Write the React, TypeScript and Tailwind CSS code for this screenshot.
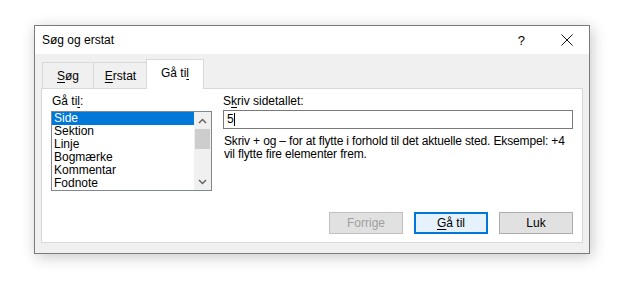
const items = ['Side', 'Sektion', 'Linje', 'Bogmærke', 'Kommentar', 'Fodnote']

const font = { fontFamily: '"Liberation Sans", Arial, sans-serif' }

function Chevron({ down }: { down?: boolean }) {
  return (
    <svg width="9" height="6" viewBox="0 0 9 6" className="block">
      <polyline
        points={down ? '1,1 4.5,4.5 8,1' : '1,5 4.5,1.5 8,5'}
        fill="none"
        stroke="#606060"
        strokeWidth="1.4"
      />
    </svg>
  )
}

export default function App() {
  return (
    <div className="w-[620px] h-[282px] bg-white pt-[25px] pl-[34px] text-[12px] leading-[13px] text-black" style={font}>
      <div className="w-[556px] h-[229px] border border-[#7a7a7a] bg-[#f0f0f0] shadow-[2px_3px_14px_rgba(0,0,0,0.22)] flex flex-col">
        {/* Title bar */}
        <div className="h-[28px] bg-white flex items-center pl-[7px] pr-[16px]">
          <span className="text-[12px]">Søg og erstat</span>
          <span className="ml-auto mr-[36px] text-[13px]">?</span>
          <svg width="12" height="12" viewBox="0 0 12 12">
            <path d="M0.5 0.5 L11.5 11.5 M11.5 0.5 L0.5 11.5" stroke="#111" strokeWidth="1" />
          </svg>
        </div>

        {/* Body */}
        <div className="flex-1 flex flex-col px-[6px] pt-[5px] pb-[10px]">
          {/* Tabs */}
          <div className="h-[29px] flex items-end pl-[1px] relative z-10">
            <div className="h-[26px] w-[52px] border border-b-0 border-[#d9d9d9] flex items-center justify-center pt-[2px]">
              <span><span className="underline underline-offset-2">S</span>øg</span>
            </div>
            <div className="h-[26px] w-[54px] border border-b-0 border-l-0 border-[#d9d9d9] flex items-center justify-center pt-[2px]">
              <span><span className="underline underline-offset-2">E</span>rstat</span>
            </div>
            <div className="h-[30px] w-[58px] -mb-px -ml-[2px] bg-white border border-b-0 border-[#d9d9d9] flex items-center justify-center pb-[2px]">
              <span>Gå ti<span className="underline underline-offset-2">l</span></span>
            </div>
          </div>

          {/* Panel */}
          <div className="flex-1 bg-white border border-[#d9d9d9] flex flex-col pl-[9px] pr-[9px] pt-[6px] pb-[8px]">
            <div className="flex gap-[11px]">
              {/* Left column */}
              <div className="w-[161px] flex flex-col">
                <div className="h-[14px] pl-[1px]">Gå ti<span className="underline underline-offset-2">l</span>:</div>
                <div className="mt-[2px] h-[80px] border border-[#828790] flex">
                  <div className="flex-1 flex flex-col">
                    {items.map((it, i) => (
                      <div
                        key={it}
                        className={`h-[13px] pl-[2px] flex items-center ${
                          i === 0 ? 'bg-[#0078d7] text-white' : ''
                        }`}
                      >
                        {it}
                      </div>
                    ))}
                  </div>
                  <div className="w-[17px] bg-[#f0f0f0] flex flex-col items-center">
                    <div className="h-[17px] flex items-center justify-center">
                      <Chevron />
                    </div>
                    <div className="w-[15px] h-[20px] bg-[#cdcdcd]" />
                    <div className="flex-1" />
                    <div className="h-[17px] flex items-center justify-center">
                      <Chevron down />
                    </div>
                  </div>
                </div>
              </div>

              {/* Right column */}
              <div className="flex-1 min-w-0 flex flex-col">
                <div className="h-[14px]">S<span className="underline underline-offset-2">k</span>riv sidetallet:</div>
                <div className="mt-px h-[19px] border border-[#7a7a7a] flex items-center pl-[3px]">
                  <span>5</span>
                  <span className="w-px h-[13px] bg-black" />
                </div>
                <p className="mt-[6px] pl-px whitespace-nowrap tracking-[-0.15px]">
                  Skriv + og – for at flytte i forhold til det aktuelle sted. Eksempel: +4
                  <br />
                  vil flytte fire elementer frem.
                </p>
              </div>
            </div>

            {/* Buttons */}
            <div className="mt-auto flex justify-end gap-[11px]">
              <button className="w-[74px] h-[22px] bg-[#e1e1e1] border border-[#bfbfbf] text-[#a0a0a0]">
                Forrige
              </button>
              <button className="w-[74px] h-[22px] bg-[#e5f1fb] border-2 border-[#0078d7]">
                <span className="underline underline-offset-2">G</span>å til
              </button>
              <button className="w-[74px] h-[22px] bg-[#e1e1e1] border border-[#adadad]">
                Luk
              </button>
            </div>
          </div>
        </div>
      </div>
    </div>
  )
}
